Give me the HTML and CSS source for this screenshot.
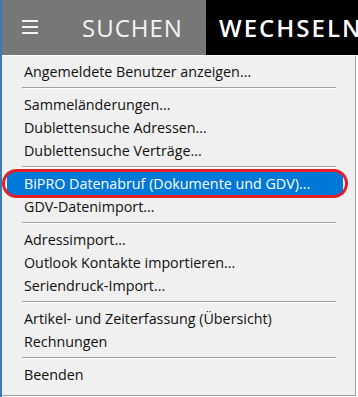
FILE: index.html
```html
<!DOCTYPE html>
<html lang="de">
<head>
    <meta charset="UTF-8">
    <meta name="viewport" content="width=device-width, initial-scale=1.0">
    <title>Menü</title>
    <link rel="stylesheet" href="styles.css">
</head>
<body>
    <div class="app">
        <div class="topbar">
            <div class="main-btn">
                <span class="burger">
                    <span></span><span></span><span></span>
                </span>
                <span class="tab-label">SUCHEN</span>
            </div>
            <div class="switch-btn">WECHSELN</div>
        </div>

        <div class="menu">
            <div class="item">Angemeldete Benutzer anzeigen...</div>
            <div class="sep"></div>
            <div class="item">Sammeländerungen...</div>
            <div class="item">Dublettensuche Adressen...</div>
            <div class="item">Dublettensuche Verträge...</div>
            <div class="sep"></div>
            <div class="item active">BiPRO Datenabruf (Dokumente und GDV)...</div>
            <div class="item">GDV-Datenimport...</div>
            <div class="sep"></div>
            <div class="item">Adressimport...</div>
            <div class="item">Outlook Kontakte importieren...</div>
            <div class="item">Seriendruck-Import...</div>
            <div class="sep"></div>
            <div class="item">Artikel- und Zeiterfassung (Übersicht)</div>
            <div class="item">Rechnungen</div>
            <div class="sep"></div>
            <div class="item">Beenden</div>
        </div>
    </div>
</body>
</html>
```

FILE: styles.css
```css
body {
    margin: 0;
    font-family: "Open Sans", "Noto Sans", Arial, sans-serif;
    background-color: #ffffff;
    overflow: hidden;
}

.app {
    width: 356px;
    height: 397px;
    border-left: 2px solid #3d7ab3;
}

/* top bar */
.topbar {
    display: flex;
    height: 55px;
    background: #000000;
}

.main-btn {
    width: 204px;
    background: #777777;
    display: flex;
    align-items: center;
    color: #f4f4f4;
}

.burger {
    display: flex;
    flex-direction: column;
    gap: 4px;
    width: 16px;
    margin-left: 20px;
    margin-top: -2px;
}

.burger span {
    display: block;
    height: 2px;
    background: #f4f4f4;
}

.tab-label {
    margin-left: 44px;
    font-size: 24px;
    letter-spacing: 1px;
}

/* the label runs past the window edge, as in the app */
.switch-btn {
    flex: 1;
    display: flex;
    align-items: center;
    padding-left: 13px;
    color: #ffffff;
    font-size: 24px;
    font-weight: 600;
    letter-spacing: 2px;
    white-space: nowrap;
    overflow: hidden;
}

/* dropdown */
.menu {
    width: 352px;
    background: #f0f0f0;
    border-top: 1px solid #ffffff;
    border-right: 1px solid #a0a0a0;
    border-bottom: 1px solid #a0a0a0;
    padding: 4px 0 9px 1px;
    font-size: 14.3px;
    color: #111111;
}

.item {
    height: 23px;
    line-height: 23px;
    margin: 0 12px 0 4px;
    padding-left: 17px;
    white-space: nowrap;
}

.item.active {
    position: relative;
    background: #0078d7;
    color: #ffffff;
}

/* red marker drawn round the selected entry */
.item.active::after {
    content: "";
    position: absolute;
    left: -5px;
    right: -5px;
    top: -3px;
    bottom: -3px;
    border: 3px solid #e3202a;
    border-radius: 16px;
}

.sep {
    margin: 4px 19px 4px 19px;
    border-top: 1px solid #a0a0a0;
    border-bottom: 1px solid #ffffff;
}
```
